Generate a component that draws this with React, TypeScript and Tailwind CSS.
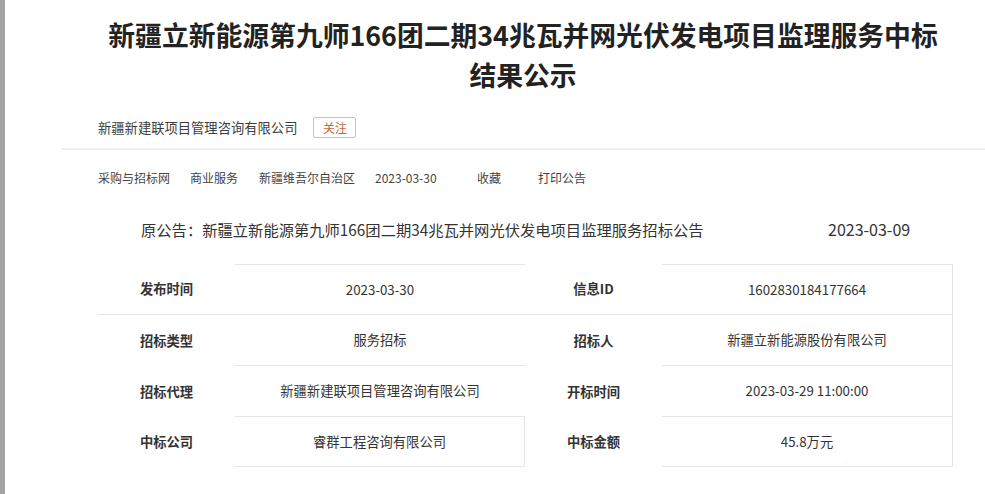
import React from "react";

const font = { fontFamily: '"Noto Sans CJK SC", "Noto Sans", sans-serif' };

type Cell = { text: string; label?: boolean; cls: string };

const rows: Cell[][] = [
  [
    { text: "发布时间", label: true, cls: "h-[51px] border-b" },
    { text: "2023-03-30", cls: "h-[51px] border-t border-b" },
    { text: "信息ID", label: true, cls: "h-[51px] border-b" },
    { text: "1602830184177664", cls: "h-[51px] border-t border-b border-r" },
  ],
  [
    { text: "招标类型", label: true, cls: "h-[51px]" },
    { text: "服务招标", cls: "h-[51px] border-b" },
    { text: "招标人", label: true, cls: "h-[51px]" },
    { text: "新疆立新能源股份有限公司", cls: "h-[51px] border-b border-r" },
  ],
  [
    { text: "招标代理", label: true, cls: "h-[51px]" },
    { text: "新疆新建联项目管理咨询有限公司", cls: "h-[51px] border-b" },
    { text: "开标时间", label: true, cls: "h-[51px]" },
    { text: "2023-03-29 11:00:00", cls: "h-[51px] border-b border-r" },
  ],
  [
    { text: "中标公司", label: true, cls: "h-[50px]" },
    { text: "睿群工程咨询有限公司", cls: "h-[50px] border-b border-r" },
    { text: "中标金额", label: true, cls: "h-[50px]" },
    { text: "45.8万元", cls: "h-[50px] border-b border-r" },
  ],
];

export default function App() {
  return (
    <div className="flex w-[985px] h-[494px] overflow-hidden bg-white" style={font}>
      <div className="w-[5px] h-full bg-[#a3a3a3] shrink-0" />
      <div className="ml-[56px] w-[924px] shrink-0 flex flex-col">
        <h1 className="pt-[15px] text-center text-[26.8px] leading-[40px] font-bold text-[#222222]">
          新疆立新能源第九师166团二期34兆瓦并网光伏发电项目监理服务中标
          <br />
          结果公示
        </h1>

        <div className="mt-[22px] h-[21px] flex items-center pl-[37px]">
          <span className="text-[13.3px] text-[#3c3c3c]">新疆新建联项目管理咨询有限公司</span>
          <span className="ml-[16px] w-[43px] h-[21px] flex items-center justify-center rounded-[2px] border border-[#f4b48e] text-[12px] text-[#c26a33]">
            关注
          </span>
        </div>

        <div className="mt-[10px] h-[2px] bg-[#eeeeee]" />

        <div className="mt-[20px] h-[16px] flex items-center pl-[37px] text-[12px] leading-[16px] text-[#444444]">
          <span className="w-[92px] shrink-0">采购与招标网</span>
          <span className="w-[69px] shrink-0">商业服务</span>
          <span className="w-[116px] shrink-0">新疆维吾尔自治区</span>
          <span className="w-[102px] shrink-0">2023-03-30</span>
          <span className="w-[61px] shrink-0">收藏</span>
          <span className="shrink-0">打印公告</span>
        </div>

        <div className="mt-[33px] h-[20px] flex items-center pl-[80px] text-[15.3px] leading-[20px] text-[#333333]">
          <span className="w-[687px] shrink-0">
            原公告：新疆立新能源第九师166团二期34兆瓦并网光伏发电项目监理服务招标公告
          </span>
          <span className="text-[16px]">2023-03-09</span>
        </div>

        <div className="mt-[25px] ml-[37px] grid grid-cols-[137px_290px_137px_291px]">
          {rows.map((row, ri) =>
            row.map((c, ci) => (
              <div
                key={`${ri}-${ci}`}
                className={`${c.cls} box-border border-[#e6e6e6] flex items-center justify-center text-[13.3px] text-[#333333] ${
                  c.label ? "font-bold" : ""
                }`}
              >
                {c.text}
              </div>
            ))
          )}
        </div>
      </div>
    </div>
  );
}
